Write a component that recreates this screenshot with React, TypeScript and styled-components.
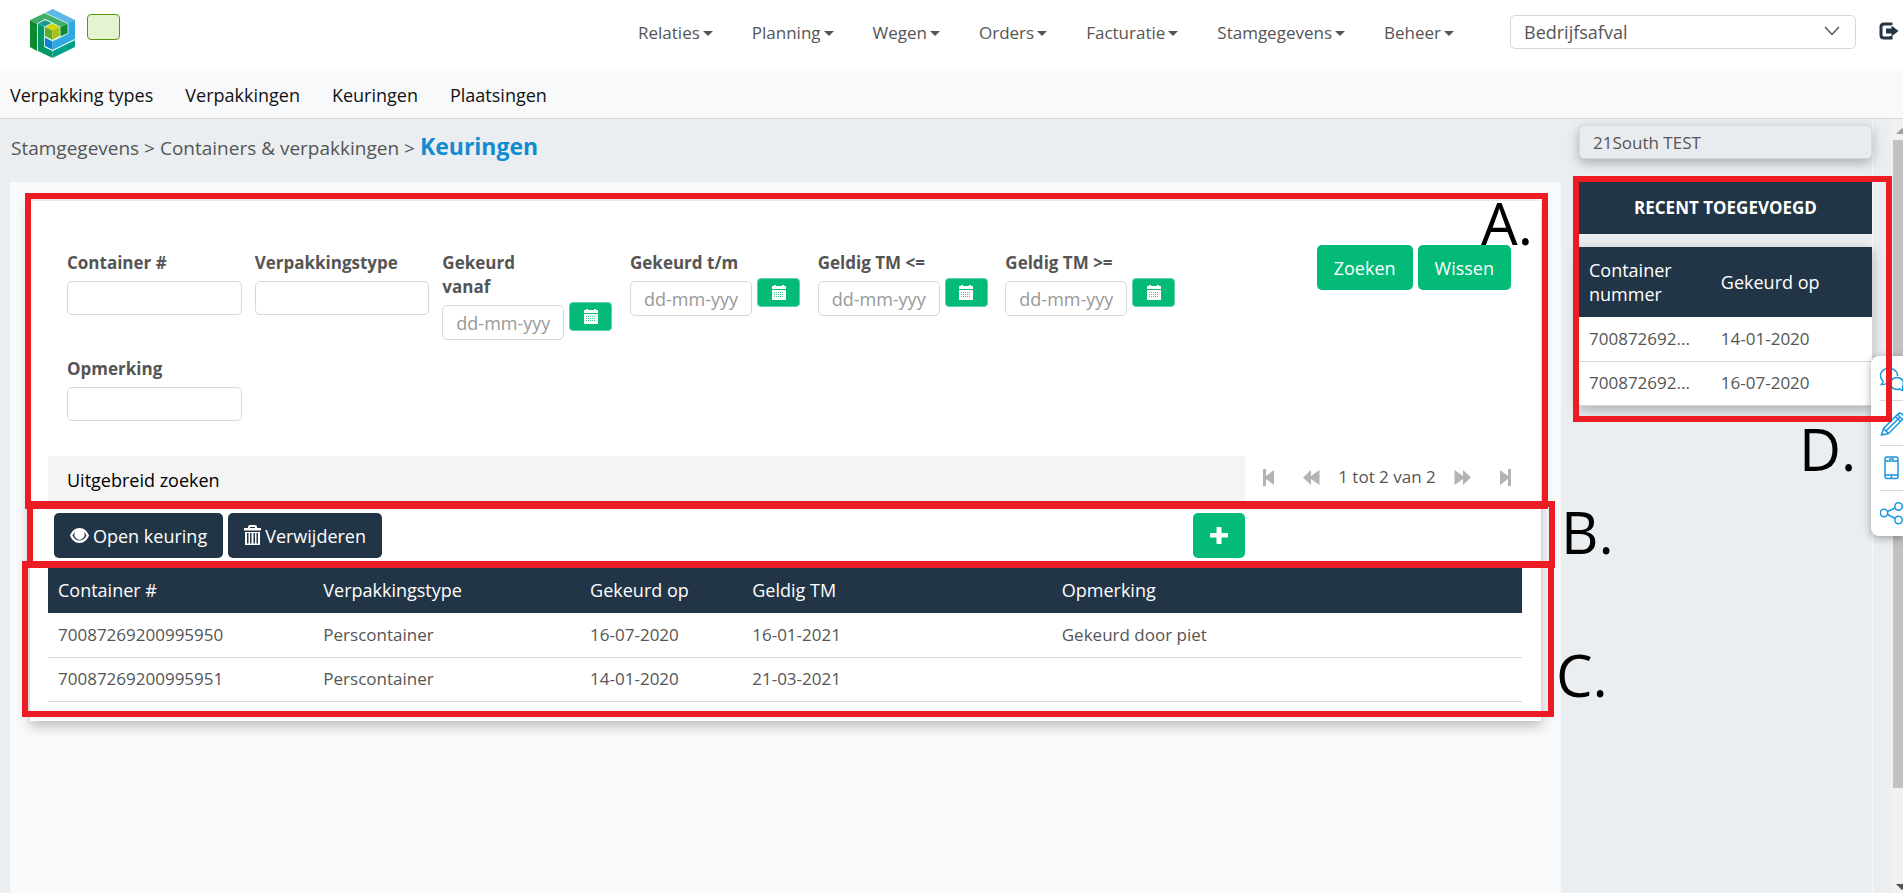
import React from 'react';
import styled, { createGlobalStyle, css } from 'styled-components';

const navy = '#223547';
const green = '#04ba77';
const red = '#ed1c24';
const panel = '#f8f9fb';
const line = '#d8d8d8';
const iconBlue = '#1a97dc';

const GlobalStyle = createGlobalStyle`
  *, *::before, *::after { box-sizing: border-box; }
  body {
    margin: 0;
    overflow: hidden;
    background: #eaeef0;
    color: #555;
    font: 17px/24px "Open Sans", "Noto Sans", sans-serif;
  }
  button, input, select { font: inherit; color: inherit; margin: 0; }
  a { color: inherit; text-decoration: none; }
`;

const Page = styled.div`
  position: relative;
  display: flex;
  flex-direction: column;
  height: 100vh;
  overflow: hidden;
`;

const Header = styled.header`
  display: flex;
  align-items: flex-start;
  height: 71px;
  flex: none;
  padding: 0 4px 0 30px;
  background: #fff;
`;

const Logo = styled.svg`
  margin-top: 9px;
`;

const Environment = styled.span`
  width: 33px;
  height: 26px;
  margin: 14px 0 0 12px;
  background: #e4f4d0;
  border: 1px solid #5a9610;
  border-radius: 4px;
`;

const MainNav = styled.nav`
  display: flex;
  gap: 39px;
  margin: 21px 56px 0 auto;
`;

const MenuButton = styled.button`
  display: flex;
  align-items: center;
  gap: 3px;
  padding: 0;
  border: 0;
  background: none;
  &::after {
    content: '';
    border: 5px solid transparent;
    border-top-color: #555;
    border-bottom: 0;
  }
`;

const SelectWrap = styled.div`
  position: relative;
  width: 346px;
  margin-top: 15px;
  font-size: 18px;
  svg {
    position: absolute;
    right: 16px;
    top: 11px;
    pointer-events: none;
  }
`;

const fieldBox = css`
  display: block;
  width: 100%;
  height: 34px;
  border: 1px solid ${line};
  border-radius: 5px;
  background: #fff;
  outline: 0;
`;

const Select = styled.select`
  ${fieldBox}
  appearance: none;
  padding: 0 13px;
`;

const IconButton = styled.button`
  display: flex;
  padding: 0;
  border: 0;
  background: none;
`;

const Logout = styled(IconButton)`
  margin: 22px 0 0 23px;
`;

const SubNav = styled.nav`
  display: flex;
  align-items: center;
  gap: 32px;
  height: 48px;
  flex: none;
  padding-left: 10px;
  background: ${panel};
  border-bottom: 1px solid ${line};
  color: #111;
  font-size: 18px;
`;

const Body = styled.div`
  display: flex;
  flex: 1;
  min-height: 0;
`;

const Main = styled.main`
  flex: 1;
  display: flex;
  flex-direction: column;
  min-width: 0;
  padding-left: 10px;
`;

const Breadcrumb = styled.div`
  display: flex;
  align-items: baseline;
  gap: 5px;
  height: 63px;
  flex: none;
  padding: 11px 0 0 1px;
  font-size: 19px;
  line-height: 32px;
  strong {
    font-size: 23px;
    color: #128bd0;
  }
`;

const Workspace = styled.div`
  flex: 1;
  padding: 19px 20px;
  background: ${panel};
`;

const Card = styled.div`
  background: #fff;
  box-shadow: 0 4px 12px rgba(0, 0, 0, 0.28);
`;

const Section = styled.section<{ $pad: string }>`
  position: relative;
  padding: ${(p) => p.$pad};
`;

const Highlight = styled.div<{ $inset: string }>`
  position: absolute;
  inset: ${(p) => p.$inset};
  z-index: 3;
  border: 6px solid ${red};
  pointer-events: none;
`;

const Marker = styled.span<{ $left: string; $top: number }>`
  position: absolute;
  left: ${(p) => p.$left};
  top: ${(p) => p.$top}px;
  z-index: 1;
  color: #000;
  font-size: 58px;
  line-height: 58px;
`;

const SearchForm = styled.form`
  display: flex;
  justify-content: space-between;
  align-items: flex-start;
  padding: 44px 11px 35px 19px;
`;

const Fields = styled.div`
  display: grid;
  grid-template-columns: repeat(6, 1fr);
  gap: 17px 13px;
  flex: 0 1 1113px;
  padding-top: 6px;
`;

const Field = styled.div`
  label {
    display: block;
    max-width: 160px;
    margin-bottom: 6px;
    font-weight: 700;
  }
`;

const NarrowField = styled(Field)`
  label { max-width: 110px; }
`;

const TextInput = styled.input`
  ${fieldBox}
  padding: 0 13px;
`;

const DateRow = styled.div`
  display: flex;
  align-items: flex-start;
  gap: 5px;
`;

const DateInput = styled(TextInput)`
  width: 122px;
  height: 35px;
  font-size: 18px;
  &::placeholder { color: #999; opacity: 1; }
`;

const CalendarButton = styled.button`
  display: flex;
  align-items: center;
  justify-content: center;
  width: 43px;
  height: 29px;
  flex: none;
  margin-top: -3px;
  padding: 0;
  border: 1px solid #5fd3a8;
  border-radius: 4px;
  background: ${green};
`;

const Actions = styled.div`
  position: relative;
  z-index: 2;
  display: flex;
  gap: 5px;
`;

const Button = styled.button<{ $dark?: boolean; $pad: number }>`
  display: flex;
  align-items: center;
  gap: 4px;
  height: 45px;
  padding: 0 ${(p) => p.$pad}px;
  border: 0;
  border-radius: 5px;
  background: ${(p) => (p.$dark ? navy : green)};
  color: #fff;
  font-size: 18px;
`;

const FooterRow = styled.div`
  display: flex;
  align-items: center;
  height: 48px;
`;

const Extended = styled.button`
  flex: 1;
  height: 48px;
  padding: 0 19px;
  border: 0;
  background: #f4f4f4;
  color: #000;
  font-size: 18px;
  text-align: left;
`;

const Pager = styled.div`
  display: flex;
  align-items: center;
  justify-content: space-between;
  width: 277px;
  height: 42px;
  padding: 0 11px 0 18px;
  align-self: flex-start;
`;

const PagerGroup = styled.div`
  display: flex;
  align-items: center;
  gap: 18px;
`;

const Toolbar = styled.div`
  display: flex;
  gap: 5px;
  padding: 0 277px 0 6px;
`;

const AddButton = styled(Button)`
  margin-left: auto;
`;

const Table = styled.table`
  width: 100%;
  border-collapse: collapse;
  table-layout: fixed;
  th {
    height: 46px;
    padding: 0 10px;
    background: ${navy};
    color: #fff;
    font-size: 18px;
    font-weight: 400;
    text-align: left;
  }
  td {
    height: 44px;
    padding: 0 10px;
    border-bottom: 1px solid ${line};
    white-space: nowrap;
  }
`;

const RecentTable = styled(Table)`
  background: #fff;
  box-shadow: 0 4px 12px rgba(0, 0, 0, 0.28);
  th { height: 70px; }
`;

const Sidebar = styled.aside`
  width: 294px;
  flex: none;
  margin: 0 18px;
  padding-top: 6px;
  border-right: 1px solid ${panel};
`;

const Company = styled.input`
  ${fieldBox}
  padding: 0 13px;
  background: #e9ecef;
  box-shadow: 0 4px 12px rgba(0, 0, 0, 0.28);
`;

const Recent = styled.section`
  position: relative;
  margin-top: 23px;
`;

const RecentTitle = styled.h2`
  margin: 0 0 13px;
  background: ${navy};
  color: #fff;
  font-size: 17px;
  line-height: 52px;
  text-align: center;
`;

const Scrollbar = styled.div`
  display: flex;
  flex-direction: column;
  justify-content: space-between;
  width: 12px;
  flex: none;
  padding: 9px 0 3px 2px;
  overflow: hidden;
  background: #f1f1f1;
`;

const Arrow = styled.span<{ $down?: boolean }>`
  width: 0;
  margin-left: 3px;
  border: 6px solid transparent;
  ${(p) =>
    p.$down
      ? 'border-bottom: 0; border-top: 6px solid #505050;'
      : 'border-top: 0; border-bottom: 6px solid #a3a3a3;'}
`;

const Thumb = styled.span`
  flex: 0 0 85%;
  margin: 6px 0 auto;
  background: #c1c1c1;
`;

const Dock = styled.div`
  position: absolute;
  top: 356px;
  right: 0;
  z-index: 2;
  width: 32px;
  padding-left: 9px;
  overflow: hidden;
  border-radius: 8px 0 0 8px;
  background: #fff;
  box-shadow: 0 2px 8px rgba(0, 0, 0, 0.35);
`;

const DockButton = styled(IconButton)`
  align-items: center;
  width: 40px;
  height: 45px;
  border-bottom: 1px solid ${line};
  &:last-child { border: 0; }
`;

const LogoMark = () => (
  <Logo width="45" height="49" viewBox="0 0 45 49" aria-label="Logo">
    <path fill="#5cb8e6" d="M15 4 22.500 0 45 11 38 14.500Z" />
    <path fill="#30a8e0" d="M38 14 45 11V30L22.500 41V32L38 24.500Z" />
    <path fill="#3fae68" d="M0 11 15 4 38 14.500 31 18 15 10 7 15Z" />
    <path fill="#0b8a30" d="M0 11 7 15V42L0 38Z" />
    <path fill="#0b8a30" d="M31 18 38 14.500V24.500L31 27Z" />
    <path fill="#0b8a30" d="M22.500 14 31 18V27L29.500 27.500V18Z" />
    <path fill="#1a9a8a" d="M8 14.500 15 11 22.500 14 15 18Z" />
    <path fill="#009966" d="M8 14.500 14.500 18V38L22.500 42V49L8 42Z" />
    <path fill="#00a08a" d="M22.500 42 45 31V38L22.500 49Z" />
    <path fill="#0a84d0" d="M15 28 22.500 32V41L15 37Z" />
    <path fill="#d0d800" d="M15 18 22.500 14 29.500 18 22.500 21.500Z" />
    <path fill="#60ae28" d="M15 18 22.500 21.500V31L15 27Z" />
    <path fill="#a8c010" d="M22.500 21.500 29.500 18V27L22.500 31Z" />
    <path
      fill="none"
      stroke="#d8f0ea"
      strokeWidth="1"
      opacity=".85"
      d="M7.500 42V14.500L15 10.500 22.500 14 30 18V27.500M15 4 38 14.500V24.500L22.500 32 14.500 28V37.500L22.500 41.500 45 30.500M14.500 28V18L22.500 14"
    />
  </Logo>
);

const LogoutIcon = () => (
  <svg width="20" height="18" viewBox="0 0 20 18" aria-hidden="true">
    <path fill="none" stroke={navy} strokeWidth="3" d="M12 3V2H5Q2 2 2 5V13Q2 16 5 16H12V14" />
    <path fill={navy} d="M7 6.500H12.500V3.500L19.500 9 12.500 14.500V11.500H7Z" />
  </svg>
);

const CalendarIcon = () => (
  <svg width="14" height="15" viewBox="0 0 14 15" aria-hidden="true">
    <path fill="#fff" d="M0 1H2V0H4V1H10V0H12V1H14V4H0ZM0 5H14V15H0Z" />
    <path stroke={green} strokeWidth="1" strokeDasharray="1 1" d="M2 7.500H12M2 9.500H12M2 11.500H12" opacity=".8" />
  </svg>
);

const EyeIcon = () => (
  <svg width="19" height="15" viewBox="0 0 19 15" aria-hidden="true">
    <path fill="#fff" fillRule="evenodd" d="M9.500 0C14 0 17.500 3.500 19 7.500 17.500 11.500 14 15 9.500 15S1.500 11.500 0 7.500C1.500 3.500 5 0 9.500 0ZM2.500 7.500C4 10.500 6.500 12.500 9.500 12.500S15 10.500 16.500 7.500C15.800 5.800 14.800 4.500 13.500 3.500A5 5 0 1 1 5.500 3.500C4.200 4.500 3.200 5.800 2.500 7.500Z" />
    <path fill="#fff" d="M8 4A3 3 0 1 0 12 7L9 7Z" />
  </svg>
);

const TrashIcon = () => (
  <svg width="17" height="21" viewBox="0 0 17 21" aria-hidden="true">
    <path fill="none" stroke="#fff" strokeWidth="2" d="M5 4V2Q5 1 6 1H11Q12 1 12 2V4" />
    <path fill="#fff" fillRule="evenodd" d="M0 3H17V5.500H0ZM1 7H16V20H1ZM3 8V18.500H4.500V8ZM6 8V18.500H7.500V8ZM9.500 8V18.500H11V8ZM12.500 8V18.500H14V8Z" />
  </svg>
);

const PlusIcon = () => (
  <svg width="18" height="17" viewBox="0 0 18 17" aria-hidden="true">
    <path fill="#fff" d="M7 0H11Q11.500 0 11.500 .5V6H17.500Q18 6 18 6.500V10Q18 10.500 17.500 10.500H11.500V16.500Q11.500 17 11 17H7Q6.500 17 6.500 16.500V10.500H.5Q0 10.500 0 10V6.500Q0 6 .5 6H6.500V.5Q6.500 0 7 0Z" />
  </svg>
);

const EndIcon = ({ flip }: { flip?: boolean }) => (
  <svg width="12" height="17" viewBox="0 0 12 17" aria-hidden="true">
    <path fill="#b3b3b3" transform={flip ? 'matrix(-1 0 0 1 12 0)' : undefined} d="M0 0H3V7L11 1V16L3 10V17H0Z" />
  </svg>
);

const StepIcon = ({ flip }: { flip?: boolean }) => (
  <svg width="17" height="17" viewBox="0 0 17 17" aria-hidden="true">
    <path fill="#b3b3b3" transform={flip ? 'matrix(-1 0 0 1 17 0)' : undefined} d="M0 8.500 8 1V7L16.500 1V16L8 10V16Z" />
  </svg>
);

const Chats = () => (
  <svg width="28" height="26" viewBox="0 -3 28 26" fill="none" stroke={iconBlue} strokeWidth="1.500">
    <path d="M3 13A8.500 7.500 0 1 1 17.500 8M3 13Q3 15 1.500 16.500 5 16.500 6.500 15.500H9" />
    <path d="M17 9.500C13 9.500 10.500 12.500 10.500 15.500S13 21.500 17 21.500Q18.500 21.500 20 21 21.500 22.500 24 22.500 22.500 21 22.500 19C25 14 22 9.500 17 9.500Z" />
  </svg>
);

const Pencil = () => (
  <svg width="26" height="26" viewBox="0 -1 26 26" fill="none" stroke={iconBlue} strokeWidth="1.500">
    <path d="M1.500 24 3.500 17.500 18 3Q20 1 22.500 3.500T23 8L8.500 22.500ZM3.500 17.500 8.500 22.500M6 20 19.500 6.500M15.500 5.500 20.500 10.500M17.500 3.500 22.500 8.500" />
  </svg>
);

const Phone = () => (
  <svg width="22" height="24" viewBox="0 0 22 24" fill="none" stroke={iconBlue} strokeWidth="1.500">
    <rect x="5" y="1" width="13" height="21.500" rx="2" />
    <path d="M5 5H18M5 19H18M9 3H14M11.500 19V22" />
  </svg>
);

const Share = () => (
  <svg width="26" height="24" viewBox="0 1 26 24" fill="none" stroke={iconBlue} strokeWidth="1.500">
    <circle cx="4" cy="12" r="3.700" />
    <circle cx="18.500" cy="5.500" r="3.700" />
    <circle cx="18.500" cy="19" r="3.700" />
    <path d="M7.500 10.500 15 7M7.500 13.500 15 17.500" />
  </svg>
);

const menus = ['Relaties', 'Planning', 'Wegen', 'Orders', 'Facturatie', 'Stamgegevens', 'Beheer'];
const subMenus = ['Verpakking types', 'Verpakkingen', 'Keuringen', 'Plaatsingen'];
const dateFields = ['Gekeurd vanaf', 'Gekeurd t/m', 'Geldig TM <=', 'Geldig TM >='];
const columns = [
  { label: 'Container #', width: '18%' },
  { label: 'Verpakkingstype', width: '18.100%' },
  { label: 'Gekeurd op', width: '11%' },
  { label: 'Geldig TM', width: '21%' },
  { label: 'Opmerking', width: 'auto' },
];
const rows = [
  ['70087269200995950', 'Perscontainer', '16-07-2020', '16-01-2021', 'Gekeurd door piet'],
  ['70087269200995951', 'Perscontainer', '14-01-2020', '21-03-2021', ''],
];
const recent = [
  ['700872692...', '14-01-2020'],
  ['700872692...', '16-07-2020'],
];

export default function App() {
  return (
    <Page>
      <GlobalStyle />
      <Header>
        <LogoMark />
        <Environment />
        <MainNav>
          {menus.map((m) => (
            <MenuButton key={m} type="button">{m}</MenuButton>
          ))}
        </MainNav>
        <SelectWrap>
          <Select aria-label="Afdeling">
            <option>Bedrijfsafval</option>
          </Select>
          <svg width="16" height="10" viewBox="0 0 16 10" fill="none" stroke="#555" strokeWidth="1.500">
            <path d="M1 1 8 8.500 15 1" />
          </svg>
        </SelectWrap>
        <Logout type="button" aria-label="Uitloggen"><LogoutIcon /></Logout>
      </Header>
      <SubNav>
        {subMenus.map((m) => (
          <a key={m} href="#">{m}</a>
        ))}
      </SubNav>
      <Body>
        <Main>
          <Breadcrumb>
            <span>Stamgegevens &gt; Containers &amp; verpakkingen &gt;</span>
            <strong>Keuringen</strong>
          </Breadcrumb>
          <Workspace>
            <Card>
              <Section $pad="0 19px 0 18px">
                <SearchForm>
                  <Fields>
                    <Field>
                      <label htmlFor="container">Container #</label>
                      <TextInput id="container" />
                    </Field>
                    <Field>
                      <label htmlFor="type">Verpakkingstype</label>
                      <TextInput id="type" />
                    </Field>
                    {dateFields.map((label, i) => (
                      <NarrowField key={label}>
                        <label htmlFor={`date-${i}`}>{label}</label>
                        <DateRow>
                          <DateInput id={`date-${i}`} placeholder="dd-mm-yyyy" />
                          <CalendarButton type="button" aria-label={`Kies datum ${label}`}>
                            <CalendarIcon />
                          </CalendarButton>
                        </DateRow>
                      </NarrowField>
                    ))}
                    <Field>
                      <label htmlFor="remark">Opmerking</label>
                      <TextInput id="remark" />
                    </Field>
                  </Fields>
                  <Actions>
                    <Button type="button" $pad={17}>Zoeken</Button>
                    <Button type="button" $pad={17}>Wissen</Button>
                  </Actions>
                </SearchForm>
                <FooterRow>
                  <Extended type="button">Uitgebreid zoeken</Extended>
                  <Pager>
                    <IconButton type="button" aria-label="Eerste"><EndIcon /></IconButton>
                    <PagerGroup>
                      <IconButton type="button" aria-label="Vorige"><StepIcon /></IconButton>
                      <span>1 tot 2 van 2</span>
                      <IconButton type="button" aria-label="Volgende"><StepIcon flip /></IconButton>
                    </PagerGroup>
                    <IconButton type="button" aria-label="Laatste"><EndIcon flip /></IconButton>
                  </Pager>
                </FooterRow>
                <Highlight $inset="-8px -7px -5px -5px" />
                <Marker $left="calc(100% - 60px)" $top={-7}>A.</Marker>
              </Section>
              <Section $pad="9px 19px 9px 18px">
                <Toolbar>
                  <Button type="button" $dark $pad={16}><EyeIcon />Open keuring</Button>
                  <Button type="button" $dark $pad={16}><TrashIcon />Verwijderen</Button>
                  <AddButton type="button" $pad={17} aria-label="Toevoegen"><PlusIcon /></AddButton>
                </Toolbar>
                <Highlight $inset="-3px -14px -1px -3px" />
                <Marker $left="calc(100% + 20px)" $top={-1}>B.</Marker>
              </Section>
              <Section $pad="0 19px 19px 18px">
                <Table>
                  <colgroup>
                    {columns.map((c) => <col key={c.label} width={c.width} />)}
                  </colgroup>
                  <thead>
                    <tr>{columns.map((c) => <th key={c.label}>{c.label}</th>)}</tr>
                  </thead>
                  <tbody>
                    {rows.map((r) => (
                      <tr key={r[0]}>{r.map((cell, i) => <td key={i}>{cell}</td>)}</tr>
                    ))}
                  </tbody>
                </Table>
                <Highlight $inset="-6px -13px 4px -8px" />
                <Marker $left="calc(100% + 15px)" $top={79}>C.</Marker>
              </Section>
            </Card>
          </Workspace>
        </Main>
        <Sidebar>
          <Company aria-label="Bedrijf" defaultValue="21South TEST" readOnly />
          <Recent>
            <RecentTitle>RECENT TOEGEVOEGD</RecentTitle>
            <RecentTable>
              <colgroup>
                <col width="45%" />
                <col />
              </colgroup>
              <thead>
                <tr>
                  <th>Container nummer</th>
                  <th>Gekeurd op</th>
                </tr>
              </thead>
              <tbody>
                {recent.map(([container, date]) => (
                  <tr key={date}>
                    <td>{container}</td>
                    <td>{date}</td>
                  </tr>
                ))}
              </tbody>
            </RecentTable>
            <Highlight $inset="-6px -20px -16px -6px" />
            <Marker $left="220px" $top={238}>D.</Marker>
          </Recent>
        </Sidebar>
        <Scrollbar>
          <Arrow />
          <Thumb />
          <Arrow $down />
        </Scrollbar>
      </Body>
      <Dock>
        <DockButton type="button" aria-label="Chat"><Chats /></DockButton>
        <DockButton type="button" aria-label="Bewerken"><Pencil /></DockButton>
        <DockButton type="button" aria-label="Mobiel"><Phone /></DockButton>
        <DockButton type="button" aria-label="Delen"><Share /></DockButton>
      </Dock>
    </Page>
  );
}
